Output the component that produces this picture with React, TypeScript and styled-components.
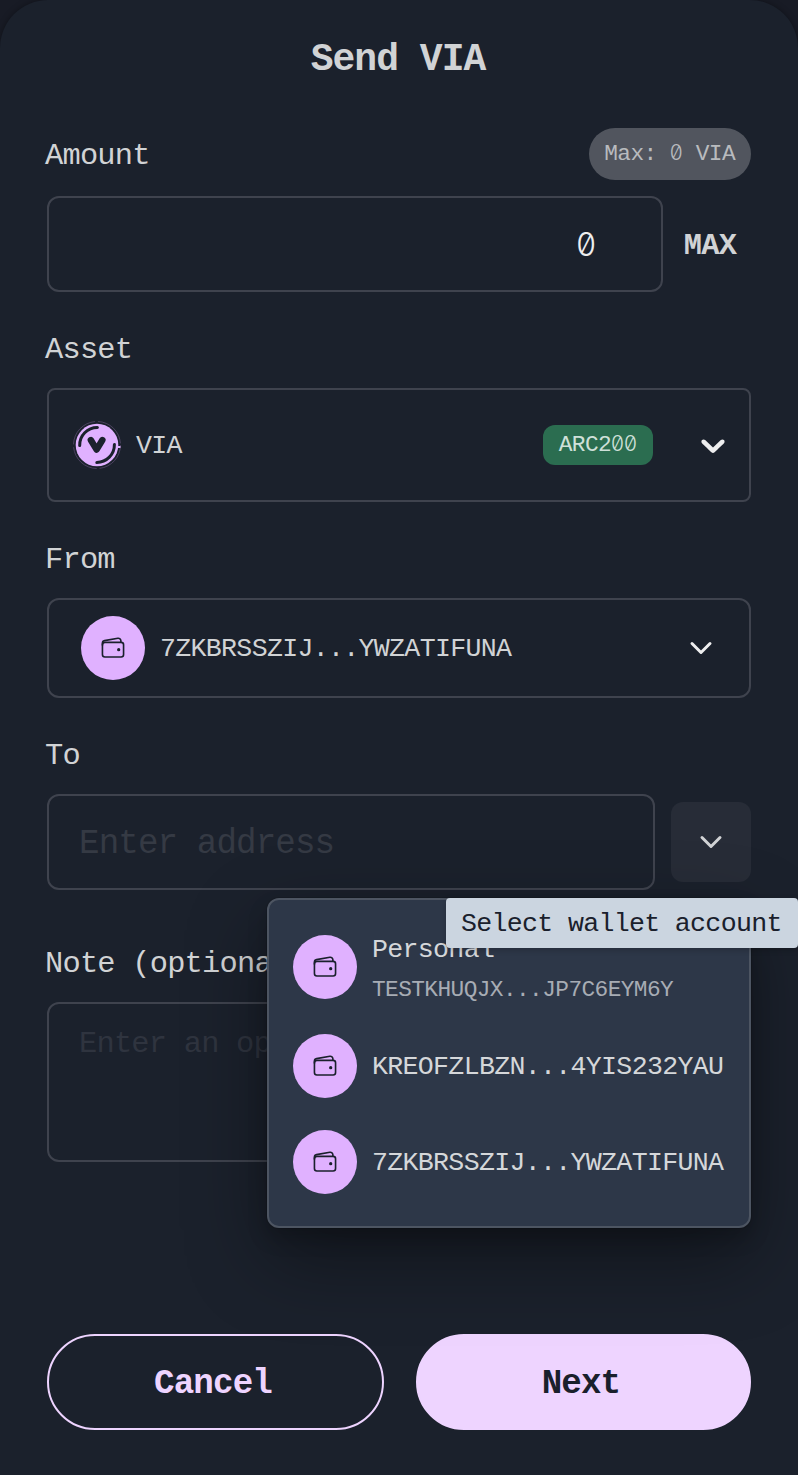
import React from 'react';
import styled, { createGlobalStyle, css } from 'styled-components';
import { IoChevronDown, IoWalletOutline } from 'react-icons/io5';

const GlobalStyle = createGlobalStyle`
  *, *::before, *::after {
    box-sizing: border-box;
    letter-spacing: -0.0258em;
  }
  body {
    margin: 0;
    background: #181b25;
    overflow: hidden;
  }
  body, input, textarea, button {
    font-family: 'Liberation Mono', monospace;
  }
`;

const text = '#d1d3d5';
const border = '#3f434e';

const size = {
  small: '22.8px',
  body: '26.6px',
  label: '30.4px',
  large: '34.2px',
  title: '38px',
};

const Modal = styled.main`
  display: flex;
  flex-direction: column;
  width: 798px;
  height: 1475px;
  padding: 0 47px 45px;
  border-radius: 48px 48px 0 0;
  background: #1b212c;
  box-shadow: 0 0 6px rgba(0, 0, 0, 0.35);
  color: ${text};
`;

const Title = styled.h1`
  margin: 36px 2px 44px 0;
  font-size: ${size.title};
  line-height: 48px;
  font-weight: 700;
  text-align: center;
`;

const Field = styled.section<{ $gap: number }>`
  display: flex;
  flex-direction: column;
  margin-bottom: ${(p) => p.$gap}px;
`;

const LabelRow = styled.div<{ $tall?: boolean }>`
  display: flex;
  align-items: center;
  justify-content: space-between;
  height: ${(p) => (p.$tall ? 52 : 48)}px;
  margin-bottom: ${(p) => (p.$tall ? 16 : 14)}px;
`;

const Label = styled.label<{ $drop?: number }>`
  margin-left: -2px;
  padding-top: ${(p) => p.$drop ?? 0}px;
  font-size: ${size.label};
  line-height: 48px;
  white-space: nowrap;
`;

const MaxPill = styled.span`
  height: 52px;
  padding: 0 16px 0 15px;
  border-radius: 26px;
  background: #51555e;
  color: #b9bbbe;
  font-size: ${size.small};
  line-height: 53px;
`;

const slashedZero = css`
  font-family: Inter, 'Liberation Mono', monospace;
  font-weight: 300;
  font-feature-settings: 'zero' 1;
`;

const Zero = styled.span`
  ${slashedZero}
  font-size: 0.92em;
  line-height: 1;
  letter-spacing: 0;
`;

const Row = styled.div<{ $gap?: number }>`
  position: relative;
  display: flex;
  align-items: center;
  gap: ${(p) => p.$gap ?? 0}px;
`;

const frame = css`
  border: 2px solid ${border};
  border-radius: 12px;
  background: transparent;
  outline: none;
`;

const TextInput = styled.input`
  ${frame}
  flex: 1;
  min-width: 0;
  height: 96px;
  padding: 3px 30px 0;
  color: #eeeeef;
  font-size: ${size.large};
  &::placeholder { color: #353a44; opacity: 1; }
`;

const AmountInput = styled(TextInput)`
  ${slashedZero}
  padding: 1px 65px 0 30px;
  font-size: 32px;
  letter-spacing: 0;
  text-align: right;
`;

const NoteInput = styled.textarea`
  ${frame}
  height: 160px;
  padding: 17px 30px;
  font-size: ${size.label};
  line-height: 46px;
  resize: none;
  &::placeholder { color: #2f343f; opacity: 1; }
`;

const MaxButton = styled.button`
  width: 88px;
  padding: 4px 0 0 6px;
  border: 0;
  background: none;
  color: ${text};
  font-size: ${size.label};
  font-weight: 700;
`;

const SelectBox = styled.div<{ $height: number; $pad: string; $radius: number }>`
  ${frame}
  display: flex;
  align-items: center;
  height: ${(p) => p.$height}px;
  padding: ${(p) => p.$pad};
  border-radius: ${(p) => p.$radius}px;
  font-size: ${size.body};
`;

const SelectText = styled.span<{ $gap: number }>`
  flex: 1;
  padding-top: 1px;
  margin-left: ${(p) => p.$gap}px;
`;

const Badge = styled.span`
  height: 40px;
  margin-right: 40px;
  padding: 0 16px;
  border-radius: 12px;
  background: #2b6d50;
  color: #cfe0d9;
  font-size: ${size.small};
  line-height: 41px;
`;

const Avatar = styled.span`
  display: flex;
  flex: none;
  align-items: center;
  justify-content: center;
  width: 64px;
  height: 64px;
  border-radius: 50%;
  background: #e0b1ff;
  color: #1a202c;
`;

const AccountButton = styled.button`
  display: flex;
  align-items: center;
  justify-content: center;
  width: 80px;
  height: 80px;
  border: 0;
  border-radius: 12px;
  background: #272c37;
  color: ${text};
`;

const Menu = styled.div`
  position: absolute;
  z-index: 1;
  top: 104px;
  right: 0;
  width: 484px;
  height: 330px;
  padding: 16px 0;
  border: 2px solid #4d5562;
  border-radius: 12px;
  background: #2d3748;
  box-shadow: 0 0 0 1px rgba(0, 0, 0, 0.1), 0 10px 20px rgba(0, 0, 0, 0.2),
    0 30px 80px rgba(0, 0, 0, 0.4);
`;

const MenuItem = styled.div<{ $tall?: boolean }>`
  display: flex;
  align-items: center;
  gap: 15px;
  height: ${(p) => (p.$tall ? 102 : 96)}px;
  padding: 0 24px;
`;

const AccountLines = styled.div`
  display: flex;
  flex-direction: column;
  gap: 3px;
  padding-top: 4px;
`;

const AccountText = styled.span<{ $minor?: boolean }>`
  padding-top: 1px;
  color: ${(p) => (p.$minor ? '#a7acb4' : '#d5d7da')};
  font-size: ${(p) => (p.$minor ? size.small : size.body)};
  line-height: 36px;
  white-space: nowrap;
`;

const Tooltip = styled.div`
  position: absolute;
  z-index: 2;
  top: 104px;
  right: -47px;
  height: 50px;
  width: 352px;
  padding: 0 15px;
  border-radius: 4px;
  background: #cbd5e0;
  color: #1a202c;
  box-shadow: 0 2px 6px rgba(0, 0, 0, 0.2);
  font-size: ${size.body};
  line-height: 52px;
  white-space: nowrap;
`;

const Footer = styled.footer`
  display: grid;
  grid-template-columns: 337px 335px;
  gap: 32px;
  margin-top: auto;
`;

const ActionButton = styled.button<{ $solid?: boolean }>`
  height: 96px;
  padding: 3px 5px 0 0;
  border: 2px solid #eed4ff;
  border-radius: 48px;
  background: ${(p) => (p.$solid ? '#eed4ff' : 'transparent')};
  color: ${(p) => (p.$solid ? '#1a202c' : '#eed4ff')};
  font-size: ${size.large};
  font-weight: 700;
`;

const AssetLogo = () => (
  <svg width="50" height="50" viewBox="0 0 50 50" fill="none">
    <circle cx="25" cy="25" r="23.5" stroke="#574a6b" strokeWidth="0.8" strokeDasharray="34 3" />
    <circle cx="25" cy="25" r="21.3" fill="#e0b1ff" />
    <path d="M44 26h4.5v2H44z" fill="#e0b1ff" />
    <path
      d="M7.7 25.6A17.6 17.6 0 0 1 25.4 7.5M42.4 24.5A17.6 17.6 0 0 1 24.8 42.4"
      stroke="#1b212c"
      strokeWidth="3"
      strokeLinecap="round"
    />
    <path
      d="M18.8 20L24.6 29.6L30.4 20"
      stroke="#1b212c"
      strokeWidth="6.4"
      strokeLinecap="round"
      strokeLinejoin="round"
    />
  </svg>
);

const SelectChevron = () => (
  <svg width="40" height="40" viewBox="0 0 20 20" fill="#eeeeef">
    <path d="M4.516 7.548c0.436-0.446 1.043-0.481 1.576 0l3.908 3.747 3.908-3.747c0.533-0.481 1.141-0.446 1.574 0 0.436 0.445 0.408 1.197 0 1.615-0.406 0.418-4.695 4.502-4.695 4.502-0.217 0.223-0.502 0.335-0.787 0.335s-0.57-0.112-0.789-0.335c0 0-4.287-4.084-4.695-4.502s-0.436-1.17 0-1.615z" />
  </svg>
);

const WalletAvatar = () => (
  <Avatar>
    <IoWalletOutline size={26} />
  </Avatar>
);

export default function App() {
  return (
    <>
      <GlobalStyle />
      <Modal>
        <Title>Send VIA</Title>

        <Field $gap={34}>
          <LabelRow $tall>
            <Label $drop={3}>Amount</Label>
            <MaxPill>
              Max: <Zero>0</Zero> VIA
            </MaxPill>
          </LabelRow>
          <Row>
            <AmountInput defaultValue="0" />
            <MaxButton>MAX</MaxButton>
          </Row>
        </Field>

        <Field $gap={34}>
          <LabelRow>
            <Label>Asset</Label>
          </LabelRow>
          <SelectBox $height={114} $pad="0 16px 0 23px" $radius={8}>
            <AssetLogo />
            <SelectText $gap={14}>VIA</SelectText>
            <Badge>
              ARC2<Zero>00</Zero>
            </Badge>
            <SelectChevron />
          </SelectBox>
        </Field>

        <Field $gap={34}>
          <LabelRow>
            <Label>From</Label>
          </LabelRow>
          <SelectBox $height={100} $pad="0 32px" $radius={12}>
            <WalletAvatar />
            <SelectText $gap={15}>7ZKBRSSZIJ...YWZATIFUNA</SelectText>
            <IoChevronDown size={32} color="#eeeeef" />
          </SelectBox>
        </Field>

        <Field $gap={50}>
          <LabelRow>
            <Label>To</Label>
          </LabelRow>
          <Row $gap={16}>
            <TextInput placeholder="Enter address" />
            <AccountButton>
              <IoChevronDown size={32} />
            </AccountButton>
            <Menu>
              <MenuItem $tall>
                <WalletAvatar />
                <AccountLines>
                  <AccountText>Personal</AccountText>
                  <AccountText $minor>TESTKHUQJX...JP7C6EYM6Y</AccountText>
                </AccountLines>
              </MenuItem>
              <MenuItem>
                <WalletAvatar />
                <AccountText>KREOFZLBZN...4YIS232YAU</AccountText>
              </MenuItem>
              <MenuItem>
                <WalletAvatar />
                <AccountText>7ZKBRSSZIJ...YWZATIFUNA</AccountText>
              </MenuItem>
            </Menu>
            <Tooltip>Select wallet account</Tooltip>
          </Row>
        </Field>

        <Field $gap={0}>
          <LabelRow>
            <Label>Note (optional)</Label>
          </LabelRow>
          <NoteInput placeholder="Enter an optional note" />
        </Field>

        <Footer>
          <ActionButton>Cancel</ActionButton>
          <ActionButton $solid>Next</ActionButton>
        </Footer>
      </Modal>
    </>
  );
}
